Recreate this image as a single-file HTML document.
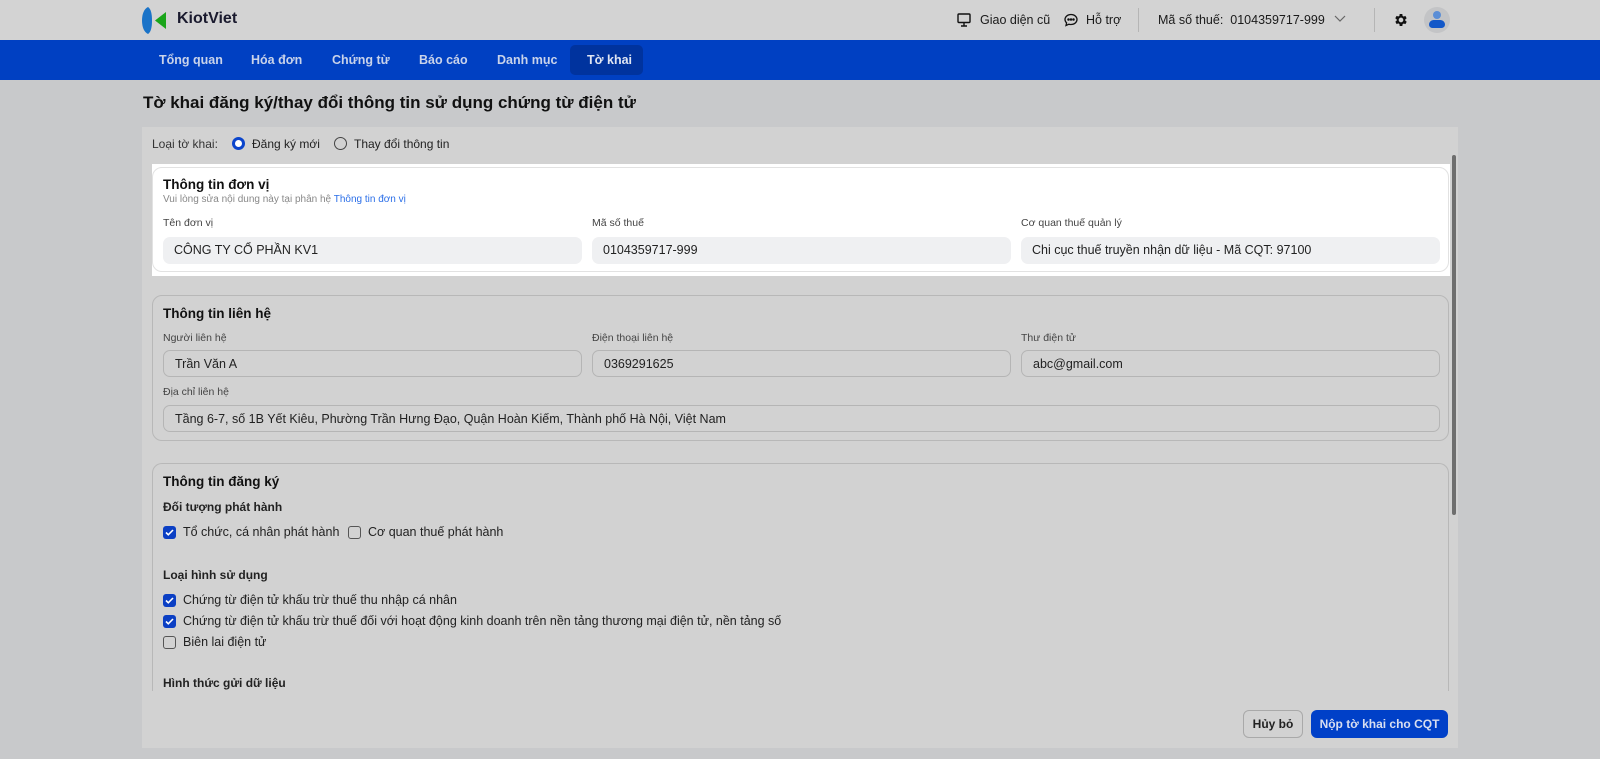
<!DOCTYPE html>
<html><head><meta charset="utf-8"><style>
*{box-sizing:border-box;margin:0;padding:0}
body{width:1600px;height:759px;overflow:hidden;background:#c8c9cb;font-family:"Liberation Sans",sans-serif;color:#1a1a1a;position:relative;font-size:13px}
.abs{position:absolute}
.top{left:0;top:0;width:1600px;height:40px;background:#d3d3d3}
.nav{left:0;top:40px;width:1600px;height:40px;background:#0040c2}
.tab{position:absolute;top:0;height:40px;line-height:40px;color:#c9d3ea;font-weight:bold;font-size:12.5px}
.panel{left:142px;top:127px;width:1316px;height:621px;background:#d2d2d2}
.card{position:absolute;left:10px;width:1297px;border:1px solid #b8b8b8;border-radius:10px}
.h{position:absolute;left:10px;font-weight:bold;font-size:13.5px;color:#111}
.lbl{position:absolute;font-size:10.5px;color:#444}
.inp{position:absolute;height:27px;border-radius:7px;padding-left:11px;line-height:26px;font-size:12.5px;color:#222}
.dim{border:1px solid #b5b5b5;background:#d2d2d2}
.sub{position:absolute;left:10px;font-weight:bold;font-size:12px;color:#222}
.cb{position:absolute;width:13px;height:13px;border-radius:3px}
.on{background:#0b3fc4}
.off{border:1.3px solid #555}
.cbt{position:absolute;font-size:12.5px;color:#222}
</style></head><body>
<div class="abs top"></div>
<svg class="abs" style="left:142px;top:7px" width="28" height="27" viewBox="0 0 28 27"><path d="M6 0C2 2 0 7 0 13.5S2 25 6 27C9 25 10 20 10 13.5S9 2 6 0Z" fill="#1a73c8"/><path d="M24 5L13 13.5L24 22Z" fill="#1aa51a"/></svg>
<div class="abs" style="left:177px;top:10px;font-size:16px;font-weight:bold;color:#1a1a2e">KiotViet</div>
<svg class="abs" style="left:957px;top:13px" width="14" height="14" viewBox="0 0 14 14" fill="none" stroke="#111" stroke-width="1.4"><rect x="1" y="1" width="12" height="8.5" rx="1"/><path d="M4 13h6M7 10v3"/></svg>
<div class="abs" style="left:980px;top:13px;font-size:12.5px">Giao diện cũ</div>
<svg class="abs" style="left:1064px;top:13px" width="14" height="14" viewBox="0 0 14 14" fill="none" stroke="#111" stroke-width="1.3"><path d="M7 1.5C3.5 1.5 1 3.8 1 6.5c0 1.3.6 2.5 1.6 3.4L2 12.5l3-1.3c.6.2 1.3.3 2 .3 3.5 0 6-2.3 6-5S10.5 1.5 7 1.5Z"/><circle cx="4.5" cy="6.5" r=".6" fill="#111"/><circle cx="7" cy="6.5" r=".6" fill="#111"/><circle cx="9.5" cy="6.5" r=".6" fill="#111"/></svg>
<div class="abs" style="left:1086px;top:13px;font-size:12.5px">Hỗ trợ</div>
<div class="abs" style="left:1138px;top:8px;width:1px;height:24px;background:#b5b5b5"></div>
<div class="abs" style="left:1158px;top:13px;font-size:12.5px">Mã số thuế:&nbsp; 0104359717-999</div>
<svg class="abs" style="left:1334px;top:15px" width="12" height="8" viewBox="0 0 12 8" fill="none" stroke="#666" stroke-width="1.2"><path d="M1 1l5 5 5-5"/></svg>
<div class="abs" style="left:1374px;top:8px;width:1px;height:24px;background:#b5b5b5"></div>
<svg class="abs" style="left:1393px;top:12px" width="16" height="16" viewBox="0 0 24 24"><path fill="#111" d="M19.4 13a7.5 7.5 0 0 0 0-2l2.1-1.6-2-3.5-2.5 1a7.4 7.4 0 0 0-1.7-1L15 3h-4l-.4 2.8a7.4 7.4 0 0 0-1.7 1l-2.5-1-2 3.5L6.6 11a7.5 7.5 0 0 0 0 2l-2.1 1.6 2 3.5 2.5-1c.5.4 1.1.7 1.7 1L11 21h4l.4-2.8c.6-.3 1.2-.6 1.7-1l2.5 1 2-3.5ZM13 15.5a3.5 3.5 0 1 1 0-7 3.5 3.5 0 0 1 0 7Z" transform="translate(-1 0)"/></svg>
<div class="abs" style="left:1424px;top:7px;width:26px;height:26px;border-radius:50%;background:#c3c4c6"></div>
<div class="abs" style="left:1433px;top:11px;width:8px;height:8px;border-radius:50%;background:#5b8ed6"></div>
<div class="abs" style="left:1429px;top:20px;width:16px;height:8px;border-radius:8px 8px 6px 6px;background:#1358c8"></div>

<div class="abs nav">
<div class="tab" style="left:159px">Tổng quan</div>
<div class="tab" style="left:251px">Hóa đơn</div>
<div class="tab" style="left:332px">Chứng từ</div>
<div class="tab" style="left:419px">Báo cáo</div>
<div class="tab" style="left:497px">Danh mục</div>
<div class="abs" style="left:570px;top:5px;width:73px;height:30px;border-radius:5px;background:#00339e"></div>
<div class="tab" style="left:587px;color:#dfe5f2">Tờ khai</div>
</div>
<div class="abs" style="left:143px;top:93px;font-size:17px;font-weight:bold;color:#111">Tờ khai đăng ký/thay đổi thông tin sử dụng chứng từ điện tử</div>

<div class="abs panel">
<div class="abs" style="left:10px;top:10px;font-size:12px;color:#333">Loại tờ khai:</div>
<div class="abs" style="left:90px;top:10px;width:13px;height:13px;border-radius:50%;border:3.5px solid #0b45cc;background:#fff"></div>
<div class="abs" style="left:110px;top:10px;font-size:12px;color:#222">Đăng ký mới</div>
<div class="abs" style="left:192px;top:10px;width:13px;height:13px;border-radius:50%;border:1.3px solid #444"></div>
<div class="abs" style="left:212px;top:10px;font-size:12px;color:#222">Thay đổi thông tin</div>

<div class="abs" style="left:10px;top:37px;width:1298px;height:112px;background:#fff"></div>
<div class="card" style="top:40px;height:105px;border-color:#e2e2e2;background:#fff">
<div class="h" style="top:9px">Thông tin đơn vị</div>
<div class="abs" style="left:10px;top:26px;font-size:10px;color:#888">Vui lòng sửa nội dung này tại phân hệ <span style="color:#2a6ee8">Thông tin đơn vị</span></div>
<div class="lbl" style="left:10px;top:49px">Tên đơn vị</div>
<div class="lbl" style="left:439px;top:49px">Mã số thuế</div>
<div class="lbl" style="left:868px;top:49px">Cơ quan thuế quản lý</div>
<div class="inp" style="left:10px;top:69px;width:419px;background:#eff0f2">CÔNG TY CỔ PHẦN KV1</div>
<div class="inp" style="left:439px;top:69px;width:419px;background:#eff0f2">0104359717-999</div>
<div class="inp" style="left:868px;top:69px;width:419px;background:#eff0f2">Chi cục thuế truyền nhận dữ liệu - Mã CQT: 97100</div>
</div>

<div class="card" style="top:168px;height:146px">
<div class="h" style="top:10px">Thông tin liên hệ</div>
<div class="lbl" style="left:10px;top:36px">Người liên hệ</div>
<div class="lbl" style="left:439px;top:36px">Điện thoại liên hệ</div>
<div class="lbl" style="left:868px;top:36px">Thư điện tử</div>
<div class="inp dim" style="left:10px;top:54px;width:419px">Trần Văn A</div>
<div class="inp dim" style="left:439px;top:54px;width:419px">0369291625</div>
<div class="inp dim" style="left:868px;top:54px;width:419px">abc@gmail.com</div>
<div class="lbl" style="left:10px;top:90px">Địa chỉ liên hệ</div>
<div class="inp dim" style="left:10px;top:109px;width:1277px">Tầng 6-7, số 1B Yết Kiêu, Phường Trần Hưng Đạo, Quận Hoàn Kiếm, Thành phố Hà Nội, Việt Nam</div>
</div>

<div class="card" style="top:336px;height:228px;border-bottom:none;border-radius:10px 10px 0 0;overflow:hidden">
<div class="h" style="top:10px">Thông tin đăng ký</div>
<div class="sub" style="top:36px">Đối tượng phát hành</div>
<div class="cb on" style="left:10px;top:62px"></div><svg class="abs" style="left:12px;top:65px" width="9" height="7" viewBox="0 0 9 7" fill="none" stroke="#fff" stroke-width="1.6"><path d="M1 3.5l2.3 2.3L8 1"/></svg>
<div class="cbt" style="left:30px;top:61px">Tổ chức, cá nhân phát hành</div>
<div class="cb off" style="left:195px;top:62px"></div>
<div class="cbt" style="left:215px;top:61px">Cơ quan thuế phát hành</div>
<div class="sub" style="top:104px">Loại hình sử dụng</div>
<div class="cb on" style="left:10px;top:130px"></div><svg class="abs" style="left:12px;top:133px" width="9" height="7" viewBox="0 0 9 7" fill="none" stroke="#fff" stroke-width="1.6"><path d="M1 3.5l2.3 2.3L8 1"/></svg>
<div class="cbt" style="left:30px;top:129px">Chứng từ điện tử khấu trừ thuế thu nhập cá nhân</div>
<div class="cb on" style="left:10px;top:151px"></div><svg class="abs" style="left:12px;top:154px" width="9" height="7" viewBox="0 0 9 7" fill="none" stroke="#fff" stroke-width="1.6"><path d="M1 3.5l2.3 2.3L8 1"/></svg>
<div class="cbt" style="left:30px;top:150px">Chứng từ điện tử khấu trừ thuế đối với hoạt động kinh doanh trên nền tảng thương mại điện tử, nền tảng số</div>
<div class="cb off" style="left:10px;top:172px"></div>
<div class="cbt" style="left:30px;top:171px">Biên lai điện tử</div>
<div class="sub" style="top:212px">Hình thức gửi dữ liệu</div>
</div>

<div class="abs" style="left:1310px;top:28px;width:4px;height:360px;border-radius:2px;background:#6e6e6e"></div>

<div class="abs" style="left:1101px;top:583px;width:60px;height:28px;border:1px solid #a9a9a9;border-radius:6px;text-align:center;line-height:26px;font-weight:bold;font-size:12px;color:#222">Hủy bỏ</div>
<div class="abs" style="left:1169px;top:583px;width:137px;height:28px;background:#0040c8;border-radius:6px;text-align:center;line-height:28px;font-weight:bold;font-size:12px;color:#d8def0">Nộp tờ khai cho CQT</div>
</div>
</body></html>
